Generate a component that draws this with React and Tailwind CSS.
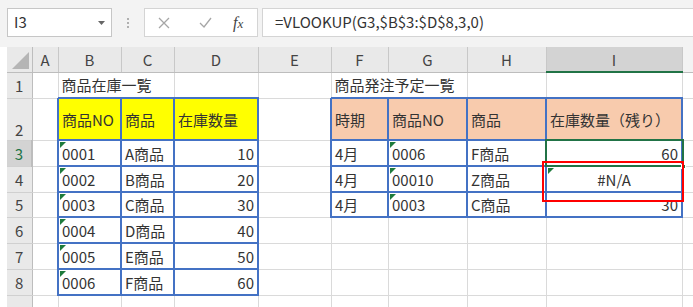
import React from "react";

const FONT = "font-['Noto_Sans_CJK_JP','Noto_Sans',sans-serif]";
const GRAY = "border border-[#dadada]";
const BLUE = "border-2 border-[#4472c4]";

function Tri() {
  return (
    <div className="absolute left-[1px] top-[1px] w-0 h-0 border-t-[6px] border-t-[#1e7b3c] border-r-[6px] border-r-transparent" />
  );
}

function C({ children, blue, bg = "bg-white", right, center, tri, colSpan, extra = "" }) {
  return (
    <td
      colSpan={colSpan}
      className={`relative p-0 ${blue ? BLUE : GRAY} ${bg} ${
        right ? "text-right pr-[3px]" : center ? "text-center" : "text-left pl-[3px]"
      } align-middle whitespace-nowrap overflow-visible text-[15px] leading-none text-[#333] ${extra}`}
    >
      {tri && <Tri />}
      {children}
    </td>
  );
}

function RH({ n, bottom, sel }) {
  return (
    <td
      className={`p-0 border-b border-b-[#d0d0d0] border-r border-r-[#bdbdbd] ${
        sel ? "bg-[#d3d3d3] text-[#217346] border-r-2 border-r-[#217346]" : "bg-[#e9e9e9] text-[#444]"
      } text-center ${bottom ? "align-bottom pb-[3px]" : "align-middle"} text-[15px] leading-none`}
    >
      {n}
    </td>
  );
}

function CH({ l, sel }) {
  return (
    <td
      className={`p-0 border-r border-r-[#c8c8c8] ${
        sel ? "bg-[#d3d3d3] border-b-2 border-b-[#217346]" : "bg-[#e9e9e9] border-b border-b-[#bdbdbd]"
      } text-center align-middle text-[15px] leading-none text-[#444]`}
    >
      {l}
    </td>
  );
}

export default function App() {
  const widths = [25, 26, 63, 53, 84, 73, 57, 79, 79, 136, 11];
  const left = [
    ["0001", "A商品", "10"],
    ["0002", "B商品", "20"],
    ["0003", "C商品", "30"],
    ["0004", "D商品", "40"],
    ["0005", "E商品", "50"],
    ["0006", "F商品", "60"],
  ];
  const right = [
    ["4月", "0006", "F商品", "60"],
    ["4月", "00010", "Z商品", "#N/A"],
    ["4月", "0003", "C商品", "30"],
  ];
  const rowH = [26, 26, 25, 26, 26, 26];

  return (
    <div className={`relative w-[693px] h-[307px] overflow-hidden bg-white ${FONT}`}>
      {/* formula bar */}
      <div className="h-[47px] bg-[#f3f3f3] flex items-start pt-[8px] pl-[7px]">
        <div className="w-[105px] h-[29px] bg-white border border-[#c6c6c6] flex items-center pl-[6px] pr-[6px] text-[15px] text-[#333]">
          <span className="flex-1">I3</span>
          <svg width="7" height="4" viewBox="0 0 7 4">
            <path d="M0 0 L7 0 L3.5 4 Z" fill="#666" />
          </svg>
        </div>
        <div className="w-[32px] h-[29px] flex flex-col items-center justify-center gap-[2px]">
          <div className="w-[2px] h-[2px] bg-[#b0b0b0]" />
          <div className="w-[2px] h-[2px] bg-[#b0b0b0]" />
          <div className="w-[2px] h-[2px] bg-[#b0b0b0]" />
        </div>
        <div className="w-[114px] h-[29px] bg-white border border-[#d4d4d4] flex items-center">
          <svg className="ml-[13px]" width="12" height="12" viewBox="0 0 12 12">
            <path d="M1 1 L11 11 M11 1 L1 11" stroke="#a6a6a6" strokeWidth="1.3" />
          </svg>
          <svg className="ml-[29px]" width="13" height="11" viewBox="0 0 13 11">
            <path d="M1 6 L5 10 L12 1" stroke="#a6a6a6" strokeWidth="1.3" fill="none" />
          </svg>
          <span className="ml-[21px] font-['Liberation_Serif',serif] italic text-[16px] text-[#444] leading-none">
            f<span className="text-[13px]">x</span>
          </span>
        </div>
        <div className="ml-[4px] flex-1 h-[29px] bg-white border border-[#d4d4d4] border-r-0 flex items-center pl-[12px] text-[15px] text-[#333]">
          =VLOOKUP(G3,$B$3:$D$8,3,0)
        </div>
      </div>

      {/* grid */}
      <div className="pl-[7px]">
        <table className="table-fixed border-collapse w-[686px]">
          <colgroup>
            {widths.map((w, i) => (
              <col key={i} style={{ width: w }} />
            ))}
          </colgroup>
          <tbody>
            <tr className="h-[25px]">
              <td className="p-0 bg-[#e9e9e9] border-r border-r-[#bdbdbd] border-b border-b-[#bdbdbd] relative">
                <svg className="absolute right-[3px] bottom-[3px]" width="17" height="17" viewBox="0 0 17 17">
                  <path d="M17 0 L17 17 L0 17 Z" fill="#b5b5b5" />
                </svg>
              </td>
              {["A", "B", "C", "D", "E", "F", "G", "H"].map((l) => (
                <CH key={l} l={l} />
              ))}
              <CH l="I" sel />
              <td className="p-0 bg-[#f3f3f3] border-b border-b-[#bdbdbd]" />
            </tr>
            <tr className="h-[26px]">
              <RH n="1" />
              <C />
              <C colSpan={2}>商品在庫一覧</C>
              <C />
              <C />
              <C colSpan={2}>商品発注予定一覧</C>
              <C />
              <C />
              <C />
            </tr>
            <tr className="h-[42px]">
              <RH n="2" bottom />
              <C />
              <C blue bg="bg-[#ffff00]">商品NO</C>
              <C blue bg="bg-[#ffff00]">商品</C>
              <C blue bg="bg-[#ffff00]">在庫数量</C>
              <C />
              <C blue bg="bg-[#f8cbad]">時期</C>
              <C blue bg="bg-[#f8cbad]">商品NO</C>
              <C blue bg="bg-[#f8cbad]">商品</C>
              <C blue bg="bg-[#f8cbad]">在庫数量（残り）</C>
              <C />
            </tr>
            {left.map((r, i) => {
              const rr = right[i];
              return (
                <tr key={i} style={{ height: rowH[i] }}>
                  <RH n={String(i + 3)} sel={i === 0} />
                  <C />
                  <C blue tri>{r[0]}</C>
                  <C blue>{r[1]}</C>
                  <C blue right>{r[2]}</C>
                  <C />
                  {rr ? (
                    <>
                      <C blue>{rr[0]}</C>
                      <C blue tri>{rr[1]}</C>
                      <C blue>{rr[2]}</C>
                      {i === 1 ? (
                        <C blue center tri>{rr[3]}</C>
                      ) : (
                        <C blue right>{rr[3]}</C>
                      )}
                    </>
                  ) : (
                    <>
                      <C />
                      <C />
                      <C />
                      <C />
                    </>
                  )}
                  <C />
                </tr>
              );
            })}
            <tr className="h-[26px]">
              <RH n="" />
              <C />
              <C />
              <C />
              <C />
              <C />
              <C />
              <C />
              <C />
              <C />
              <C />
            </tr>
          </tbody>
        </table>
      </div>

      {/* selection outline on I3 */}
      <div className="absolute left-[545px] top-[139px] w-[139px] h-[28px] border-2 border-[#217346] pointer-events-none" />
      <div className="absolute left-[681px] top-[164px] w-[5px] h-[5px] bg-[#217346] border border-white pointer-events-none" />

      {/* red annotation box */}
      <div className="absolute left-[542px] top-[161px] w-[142px] h-[41px] border-2 border-[#ff0000] pointer-events-none" />
    </div>
  );
}
